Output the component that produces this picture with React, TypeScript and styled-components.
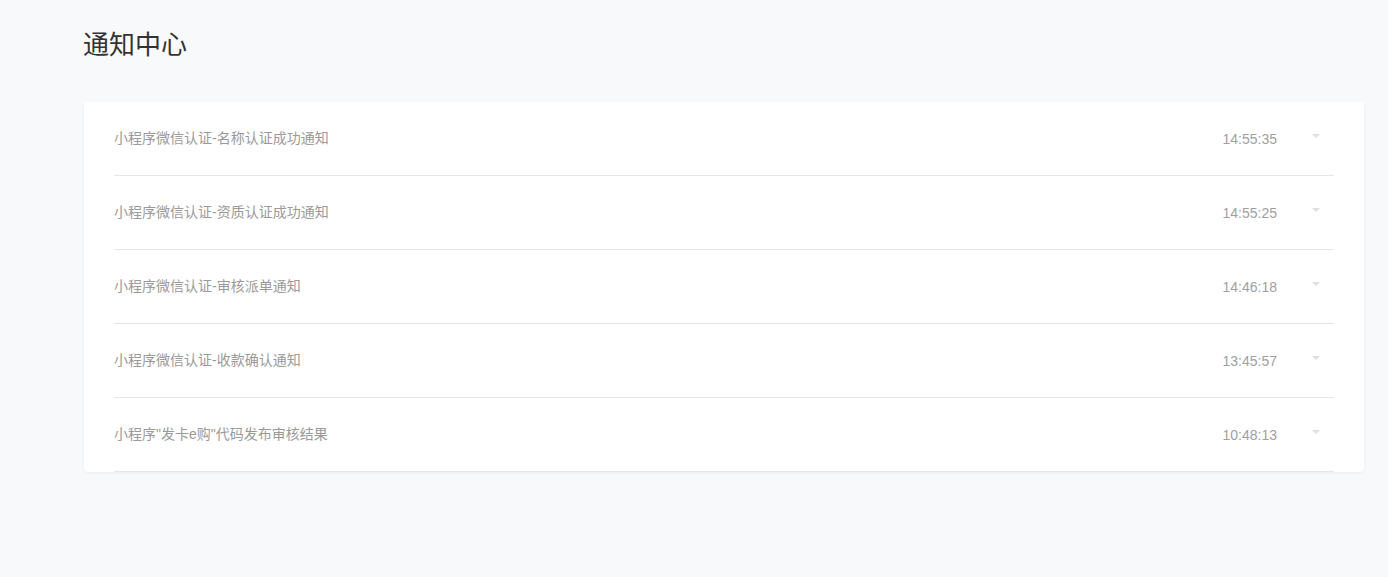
import React, { FC } from "react";
import styled, { createGlobalStyle } from "styled-components";

const GlobalStyle = createGlobalStyle`
  html, body {
    margin: 0;
    padding: 0;
    background: #f8f9fb;
    font-family: "Liberation Sans", "Noto Sans CJK SC", sans-serif;
  }
`;

const Page = styled.div`
  min-height: 577px;
  box-sizing: border-box;
  padding: 27px 24px 0 84px;
`;

const Title = styled.h1`
  margin: 0 0 0 -1px;
  font-size: 26px;
  font-weight: 400;
  line-height: 36px;
  color: #333;
`;

const Card = styled.div`
  margin-top: 39px;
  background: #fff;
  border-radius: 4px;
  box-shadow: 0 1px 3px rgba(0, 0, 0, 0.06);
  padding: 0 30px;
`;

const Row = styled.div`
  display: flex;
  align-items: center;
  height: 73px;
  border-bottom: 1px solid #e6e6e6;
`;

const Subject = styled.div`
  flex: 1;
  font-size: 14px;
  color: #9a9a9a;
  padding-bottom: 3px;
`;

const Time = styled.div`
  font-size: 14px;
  color: #a0a0a0;
  margin-right: 35px;
  padding-top: 1px;
`;

const Caret = styled.span`
  width: 0;
  height: 0;
  border-left: 4px solid transparent;
  border-right: 4px solid transparent;
  border-top: 4px solid #e0e0e0;
  margin-right: 14px;
  margin-bottom: 6px;
`;

interface Notice {
  subject: string;
  time: string;
}

const notices: Notice[] = [
  { subject: "小程序微信认证-名称认证成功通知", time: "14:55:35" },
  { subject: "小程序微信认证-资质认证成功通知", time: "14:55:25" },
  { subject: "小程序微信认证-审核派单通知", time: "14:46:18" },
  { subject: "小程序微信认证-收款确认通知", time: "13:45:57" },
  { subject: "小程序\"发卡e购\"代码发布审核结果", time: "10:48:13" },
];

const App: FC = () => {
  return (
    <>
      <GlobalStyle />
      <Page>
        <Title>通知中心</Title>
        <Card>
          {notices.map((n) => (
            <Row key={n.time}>
              <Subject>{n.subject}</Subject>
              <Time>{n.time}</Time>
              <Caret />
            </Row>
          ))}
        </Card>
      </Page>
    </>
  );
};

export default App;
